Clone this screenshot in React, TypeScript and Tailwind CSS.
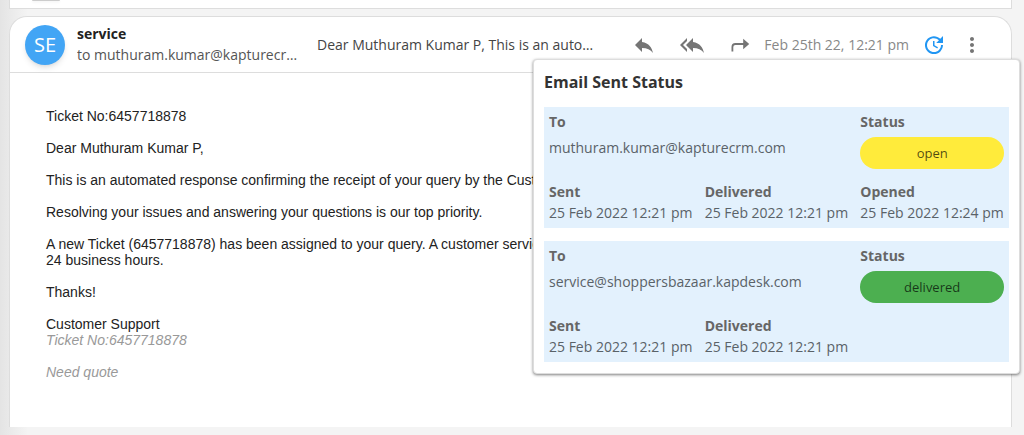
import { MdMoreVert, MdReply, MdReplyAll, MdUpdate } from "react-icons/md";

interface Delivery {
  to: string;
  status: "open" | "delivered";
  sent: string;
  delivered: string;
  opened?: string;
}

const deliveries: Delivery[] = [
  {
    to: "muthuram.kumar@kapturecrm.com",
    status: "open",
    sent: "25 Feb 2022 12:21 pm",
    delivered: "25 Feb 2022 12:21 pm",
    opened: "25 Feb 2022 12:24 pm",
  },
  {
    to: "service@shoppersbazaar.kapdesk.com",
    status: "delivered",
    sent: "25 Feb 2022 12:21 pm",
    delivered: "25 Feb 2022 12:21 pm",
  },
];

const statusStyles = {
  open: "bg-[#ffeb3b]",
  delivered: "bg-[#4caf50]",
};

function ForwardIcon() {
  return (
    <svg viewBox="0 0 20 16" className="h-4 w-5" fill="none" stroke="currentColor" strokeWidth="1.8">
      <path d="M2.4 14.5V10a3 3 0 0 1 3-3H14" />
      <path d="M13.2 1.8L19.2 7l-6 5.2z" fill="currentColor" stroke="none" />
    </svg>
  );
}

function Field({ label, value }: { label: string; value: string }) {
  return (
    <div>
      <dt className="font-bold text-[#666]">{label}</dt>
      <dd>{value}</dd>
    </div>
  );
}

function DeliveryCard({ delivery }: { delivery: Delivery }) {
  return (
    <dl className="grid grid-cols-3 gap-x-3 gap-y-3 bg-[#e3f1fd] px-[5px] pt-1 pb-[5px] text-sm leading-[21px] whitespace-nowrap text-[#5a6268]">
      <div className="col-span-2">
        <dt className="font-bold text-[#666]">To</dt>
        <dd className="mt-[5px]">{delivery.to}</dd>
      </div>
      <div>
        <dt className="font-bold text-[#666]">Status</dt>
        <dd
          className={`mt-[5px] rounded-full text-center text-[13px] leading-8 text-black/70 ${statusStyles[delivery.status]}`}
        >
          {delivery.status}
        </dd>
      </div>
      <Field label="Sent" value={delivery.sent} />
      <Field label="Delivered" value={delivery.delivered} />
      {delivery.opened && <Field label="Opened" value={delivery.opened} />}
    </dl>
  );
}

function StatusPopover() {
  return (
    <section className="absolute top-[42px] -right-[9px] w-[487px] rounded border border-[#ddd] bg-white px-2.5 py-[11px] shadow-[0_1px_3px_rgba(0,0,0,0.5)]">
      <h2 className="text-base leading-[22px] font-bold text-[#333]">Email Sent Status</h2>
      <div className="mt-[14px] flex flex-col gap-[13px]">
        {deliveries.map((delivery) => (
          <DeliveryCard key={delivery.to} delivery={delivery} />
        ))}
      </div>
    </section>
  );
}

function MessageHeader() {
  return (
    <header className="flex h-14 items-center border-b border-[#ddd] pr-[27px] pl-[15px]">
      <div className="flex size-10 shrink-0 items-center justify-center rounded-full bg-[#42a5f5] text-xl text-white shadow-md">
        SE
      </div>
      <div className="ml-3 w-[240px] shrink-0 pb-[2px] text-sm leading-[21px]">
        <p className="font-bold text-[#222]">service</p>
        <p className="w-[222px] truncate text-[#555]">to muthuram.kumar@kapturecrm.com</p>
      </div>
      <p className="min-w-0 flex-1 truncate text-sm text-[#444]">
        Dear Muthuram Kumar P, This is an automated response confirming the receipt
      </p>
      <div className="ml-7 flex shrink-0 items-center text-[#757575]">
        <button type="button" aria-label="Reply">
          <MdReply className="size-6" />
        </button>
        <button type="button" aria-label="Reply all" className="ml-6">
          <MdReplyAll className="size-6" />
        </button>
        <button type="button" aria-label="Forward" className="ml-[26px]">
          <ForwardIcon />
        </button>
        <time className="ml-[14px] text-sm text-[#888]">Feb 25th 22, 12:21 pm</time>
        <button type="button" aria-label="Sent status" className="ml-[13px] text-[#2196f3]">
          <MdUpdate className="size-6" />
        </button>
        <button type="button" aria-label="More" className="ml-[14px]">
          <MdMoreVert className="size-6" />
        </button>
      </div>
    </header>
  );
}

function MessageBody() {
  return (
    <div className="flex flex-col gap-4 px-9 pt-[35px] pb-[47px] font-['Liberation_Sans',Arial,sans-serif] text-sm leading-4 text-[#222]">
      <p>Ticket No:6457718878</p>
      <p>Dear Muthuram Kumar P,</p>
      <p>This is an automated response confirming the receipt of your query by the Customer Support team.</p>
      <p>Resolving your issues and answering your questions is our top priority.</p>
      <p>
        A new Ticket (6457718878) has been assigned to your query. A customer service executive will respond within
        <br />
        24 business hours.
      </p>
      <p>Thanks!</p>
      <div>
        <p>Customer Support</p>
        <p className="text-[#999] italic">Ticket No:6457718878</p>
      </div>
      <p className="text-[#999] italic">Need quote</p>
    </div>
  );
}

export default function App() {
  return (
    <div className="min-h-screen bg-[linear-gradient(to_right,#e4e4e4,#f4f4f4_28px)] pr-3 pb-2 pl-[9px] font-['Open_Sans',sans-serif]">
      {/* tail of the previous message, with its avatar's shadow */}
      <div className="h-[9px] overflow-hidden border border-t-0 border-[#ddd] bg-white pl-[22px]">
        <div className="h-px w-7 rounded-b-full bg-[#ccc] shadow-sm" />
      </div>
      <article className="relative mt-[7px] rounded-t-[18px] border border-b-0 border-[#ddd] bg-white">
        <MessageHeader />
        <MessageBody />
        <StatusPopover />
      </article>
    </div>
  );
}
